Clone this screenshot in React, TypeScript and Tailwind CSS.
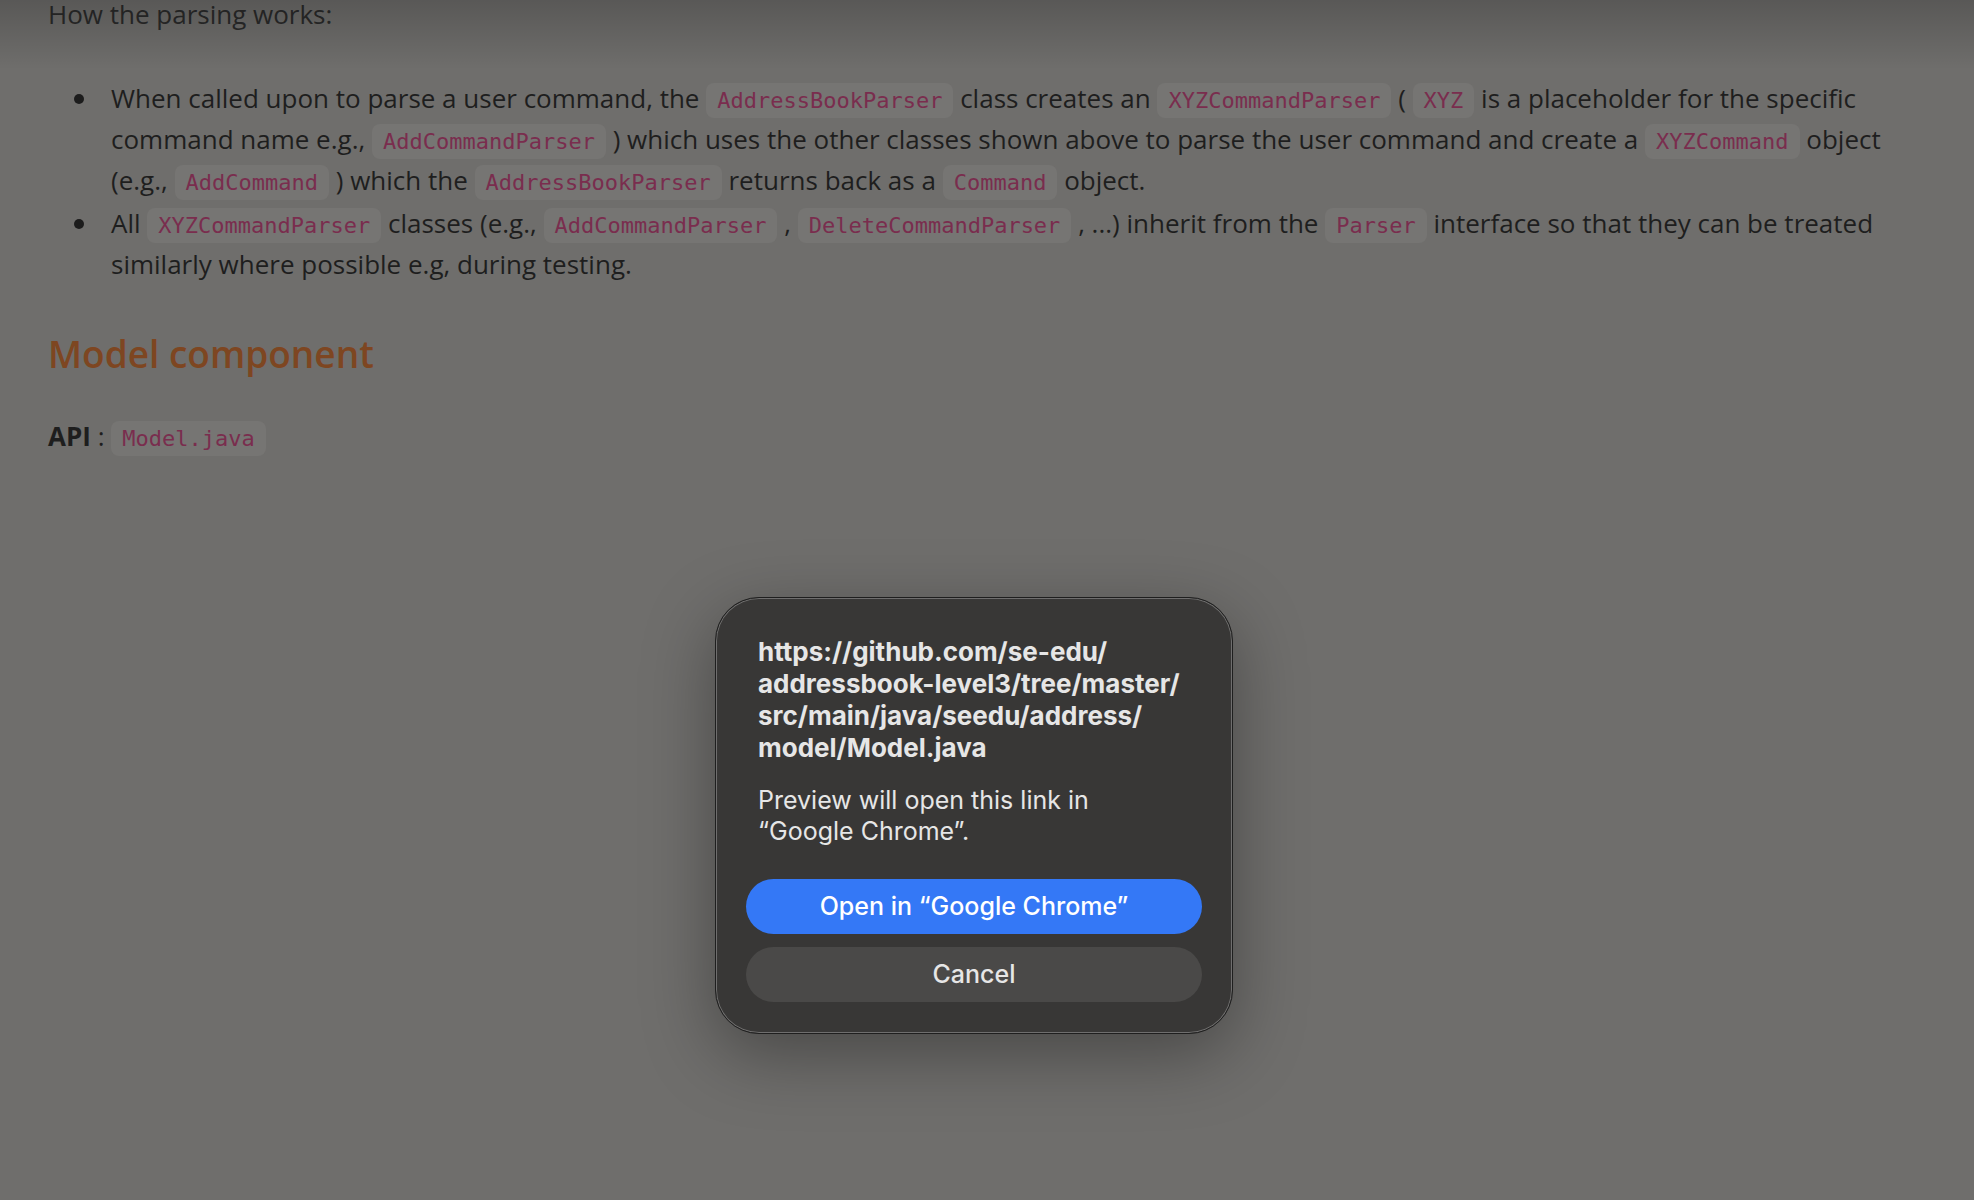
const code = "rounded-[8px] bg-[#767573] px-[11px] py-[5px] font-['DejaVu_Sans_Mono',monospace] text-[22px] leading-none text-[#7a2d4e]";

function C({ children }: { children: string }) {
  return <code className={code}>{children}</code>;
}

function Bullet({ children }: { children: React.ReactNode }) {
  return (
    <li className="flex">
      <span className="flex w-[63px] shrink-0 justify-start pl-[26px] pt-[16px]">
        <span className="h-[10px] w-[10px] rounded-full bg-[#1c1c1c]" />
      </span>
      <div className="leading-[41px]">{children}</div>
    </li>
  );
}

export default function App() {
  return (
    <div className="relative h-[1200px] w-full overflow-hidden bg-[#6f6e6c] font-['Open_Sans',sans-serif] text-[#1e1e1e]">
      <div className="pointer-events-none absolute inset-x-0 top-0 h-[70px] bg-gradient-to-b from-black/20 to-transparent" />

      <div className="px-[48px]">
        <p className="text-[26px] leading-[28px] text-[#2a2a2a]">How the parsing works:</p>

        <ul className="mt-[50px] text-[26px]">
          <Bullet>
            When called upon to parse a user command, the <C>AddressBookParser</C> class creates an{" "}
            <C>XYZCommandParser</C> ( <C>XYZ</C> is a placeholder for the specific
            <br />
            command name e.g., <C>AddCommandParser</C> ) which uses the other classes shown above to parse the user
            command and create a <C>XYZCommand</C> object
            <br />
            (e.g., <C>AddCommand</C> ) which the <C>AddressBookParser</C> returns back as a <C>Command</C> object.
          </Bullet>
          <li className="mt-[2px]" />
          <Bullet>
            All <C>XYZCommandParser</C> classes (e.g., <C>AddCommandParser</C> , <C>DeleteCommandParser</C> , ...)
            inherit from the <C>Parser</C> interface so that they can be treated
            <br />
            similarly where possible e.g, during testing.
          </Bullet>
        </ul>

        <h2 className="mt-[45px] text-[37px] font-semibold leading-[48px] text-[#7e4621]">Model component</h2>

        <p className="mt-[38px] text-[26px] leading-[41px]">
          <span className="font-bold">API</span> : <C>Model.java</C>
        </p>
      </div>

      <div className="absolute left-[715px] top-[597px] w-[518px] rounded-[44px] border border-[#1f1f1f] bg-[#383736] px-[30px] pb-[31px] pt-[38px] font-['Inter',sans-serif] shadow-[0_20px_70px_rgba(0,0,0,0.35),inset_0_0_0_1px_rgba(255,255,255,0.28)]">
        <div className="px-[12px] text-[#e6e6e6]">
          <p className="whitespace-nowrap text-[26px] font-bold leading-[32px]">
            https://github.com/se-edu/
            <br />
            addressbook-level3/tree/master/
            <br />
            src/main/java/seedu/address/
            <br />
            model/Model.java
          </p>
          <p className="mt-[21px] whitespace-nowrap text-[25px] leading-[31px]">
            Preview will open this link in
            <br />
            “Google Chrome”.
          </p>
        </div>
        <div className="mt-[32px] flex flex-col gap-[13px]">
          <button className="h-[55px] w-full rounded-full bg-[#3478f6] text-[25px] font-medium text-white">
            Open in “Google Chrome”
          </button>
          <button className="h-[55px] w-full rounded-full bg-[#4a4948] text-[25px] font-medium text-[#e6e6e6]">
            Cancel
          </button>
        </div>
      </div>
    </div>
  );
}
